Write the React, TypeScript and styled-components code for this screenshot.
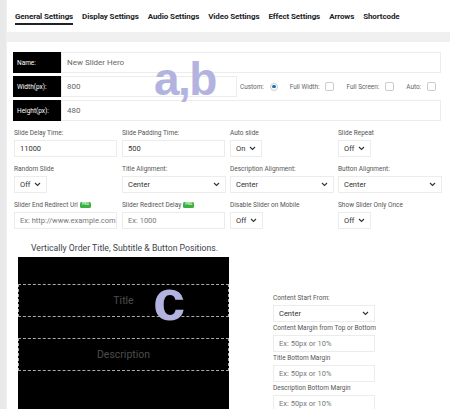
import React from "react";
import styled, { createGlobalStyle } from "styled-components";

const GlobalStyle = createGlobalStyle`
  html, body {
    margin: 0;
    padding: 0;
    background: #f0f0f1;
    font-family: Roboto, "Liberation Sans", sans-serif;
    overflow: hidden;
  }
`;

const tabs = ["General Settings", "Display Settings", "Audio Settings", "Video Settings", "Effect Settings", "Arrows", "Shortcode"];

const Chevron: React.FC = () => (
  <svg width="7" height="5" viewBox="0 0 7 5">
    <path d="M1 1 L3.5 3.5 L6 1" fill="none" stroke="#333" strokeWidth="1.1" />
  </svg>
);

const Select: React.FC<{ value: string; wide?: boolean; width?: number }> = ({ value, wide, width }) => (
  <SelectBox $wide={wide} $width={width}>
    <span>{value}</span>
    <Chevron />
  </SelectBox>
);

type Cell = { label: string; pro?: boolean; kind: "input" | "select"; value: string; placeholder?: boolean; wide?: boolean };

const grid: Cell[] = [
  { label: "Slide Delay Time:", kind: "input", value: "11000" },
  { label: "Slide Padding Time:", kind: "input", value: "500" },
  { label: "Auto slide", kind: "select", value: "On" },
  { label: "Slide Repeat", kind: "select", value: "Off" },
  { label: "Random Slide", kind: "select", value: "Off" },
  { label: "Title Alignment:", kind: "select", value: "Center", wide: true },
  { label: "Description Alignment:", kind: "select", value: "Center", wide: true },
  { label: "Button Alignment:", kind: "select", value: "Center", wide: true },
  { label: "Slider End Redirect Url", pro: true, kind: "input", value: "Ex: http://www.example.com", placeholder: true },
  { label: "Slider Redirect Delay", pro: true, kind: "input", value: "Ex: 1000", placeholder: true },
  { label: "Disable Slider on Mobile", kind: "select", value: "Off" },
  { label: "Show Slider Only Once", kind: "select", value: "Off" },
];

export default function App() {
  return (
    <>
      <GlobalStyle />
      <Page>
        <TabBar>
          {tabs.map((t, i) => (
            <Tab key={t} $active={i === 0}>
              {t}
            </Tab>
          ))}
        </TabBar>
        <Card>
          <Annotation $size={46} $top={14} $left={147}>
            a,b
          </Annotation>
          <Rows>
            <FieldRow>
              <BlackLabel>Name:</BlackLabel>
              <TextBox>New Slider Hero</TextBox>
            </FieldRow>
            <FieldRow>
              <BlackLabel>Width(px):</BlackLabel>
              <TextBox $width={176}>800</TextBox>
              <Options>
                <Option>
                  Custom: <Radio />
                </Option>
                <Option>
                  Full Width: <Check />
                </Option>
                <Option>
                  Full Screen: <Check />
                </Option>
                <Option>
                  Auto: <Check />
                </Option>
              </Options>
            </FieldRow>
            <FieldRow>
              <BlackLabel>Height(px):</BlackLabel>
              <TextBox>480</TextBox>
            </FieldRow>
          </Rows>

          <Grid>
            {grid.map((c) => (
              <Field key={c.label}>
                <Label>
                  {c.label}
                  {c.pro && <Pro>PRO</Pro>}
                </Label>
                {c.kind === "input" ? (
                  <SmallInput $placeholder={c.placeholder}>{c.value}</SmallInput>
                ) : (
                  <Select value={c.value} wide={c.wide} />
                )}
              </Field>
            ))}
          </Grid>

          <SectionTitle>Vertically Order Title, Subtitle &amp; Button Positions.</SectionTitle>

          <Split>
            <Preview>
              <DashedSlot>Title</DashedSlot>
              <DashedSlot>Description</DashedSlot>
              <Annotation $size={58} $top={14} $left={135}>
                c
              </Annotation>
            </Preview>
            <SidePanel>
              <SideField>
                <Label>Content Start From:</Label>
                <Select value="Center" width={102} />
              </SideField>
              <SideField>
                <Label>Content Margin from Top or Bottom</Label>
                <SideInput>Ex: 50px or 10%</SideInput>
              </SideField>
              <SideField>
                <Label>Title Bottom Margin</Label>
                <SideInput>Ex: 50px or 10%</SideInput>
              </SideField>
              <SideField>
                <Label>Description Bottom Margin</Label>
                <SideInput>Ex: 50px or 10%</SideInput>
              </SideField>
            </SidePanel>
          </Split>
        </Card>
      </Page>
    </>
  );
}

const Page = styled.div`
  padding-left: 7px;
  height: 409px;
  background: linear-gradient(to right, #e9e9ea 0, #e9e9ea 6px, #f0f0f1 6px);
`;

const TabBar = styled.div`
  background: #fff;
  height: 32px;
  display: flex;
  gap: 9px;
  padding-left: 8px;
  box-sizing: border-box;
`;

const Tab = styled.div<{ $active?: boolean }>`
  font-size: 8px;
  font-weight: 700;
  color: #1d2327;
  padding-top: 12px;
  height: 25px;
  box-sizing: border-box;
  border-bottom: 2px solid ${(p) => (p.$active ? "#1d2327" : "transparent")};
  white-space: nowrap;
  letter-spacing: -0.1px;
`;

const Card = styled.div`
  position: relative;
  margin-top: 10px;
  background: #fff;
  padding: 10px 9px 0 6px;
  height: 400px;
`;

const Annotation = styled.div<{ $size: number; $top: number; $left: number }>`
  position: absolute;
  top: ${(p) => p.$top}px;
  left: ${(p) => p.$left}px;
  font-family: "Liberation Sans", Arial, sans-serif;
  font-weight: 700;
  font-size: ${(p) => p.$size}px;
  line-height: 1;
  letter-spacing: -1.5px;
  color: #b3b3e0;
  pointer-events: none;
`;

const Rows = styled.div`
  display: grid;
  gap: 3px;
`;

const FieldRow = styled.div`
  display: flex;
  height: 21px;
`;

const BlackLabel = styled.div`
  width: 48px;
  flex: none;
  background: #000;
  color: #fff;
  font-size: 6.5px;
  display: flex;
  align-items: center;
  padding-left: 4px;
  box-sizing: border-box;
`;

const TextBox = styled.div<{ $width?: number }>`
  ${(p) => (p.$width ? `width: ${p.$width}px; flex: none;` : "flex: 1;")}
  border: 1px solid #ececec;
  box-sizing: border-box;
  font-size: 8px;
  color: #666;
  display: flex;
  align-items: center;
  padding-left: 5px;
`;

const Options = styled.div`
  display: flex;
  align-items: center;
  gap: 12px;
  padding-left: 3px;
`;

const Option = styled.label`
  display: flex;
  align-items: center;
  gap: 6px;
  font-size: 6.4px;
  color: #666;
`;

const Radio = styled.span`
  width: 8px;
  height: 8px;
  border-radius: 50%;
  border: 1px solid #ccc;
  box-sizing: border-box;
  display: inline-flex;
  align-items: center;
  justify-content: center;
  &::after {
    content: "";
    width: 3.5px;
    height: 3.5px;
    border-radius: 50%;
    background: #2271b1;
  }
`;

const Check = styled.span`
  width: 9px;
  height: 9px;
  border: 1px solid #ccc;
  border-radius: 2px;
  box-sizing: border-box;
  display: inline-block;
`;

const Grid = styled.div`
  display: grid;
  grid-template-columns: repeat(4, 108px);
  row-gap: 8px;
  padding: 8px 0 0 1px;
`;

const Field = styled.div`
  display: flex;
  flex-direction: column;
  align-items: flex-start;
  gap: 3px;
`;

const Label = styled.div`
  font-size: 6.5px;
  color: #555;
  height: 8px;
  display: flex;
  align-items: center;
  gap: 2px;
  white-space: nowrap;
`;

const Pro = styled.span`
  background: #3cb043;
  color: #dfffd9;
  font-size: 3.5px;
  font-weight: 700;
  border-radius: 1.5px;
  padding: 1px 2px;
  line-height: 1;
`;

const SmallInput = styled.div<{ $placeholder?: boolean }>`
  width: 103px;
  height: 17px;
  border: 1px solid #ececec;
  box-sizing: border-box;
  font-size: 7.5px;
  color: ${(p) => (p.$placeholder ? "#777" : "#333")};
  display: flex;
  align-items: center;
  padding-left: 5px;
  overflow: hidden;
  white-space: nowrap;
`;

const SelectBox = styled.div<{ $wide?: boolean; $width?: number }>`
  width: ${(p) => (p.$width ? `${p.$width}px` : p.$wide ? "104px" : "auto")};
  height: 17px;
  border: 1px solid #ececec;
  box-sizing: border-box;
  font-size: 7.5px;
  color: #333;
  display: flex;
  align-items: center;
  justify-content: space-between;
  gap: 4px;
  padding: 0 5px;
`;

const SectionTitle = styled.div`
  font-size: 8.7px;
  color: #3c434a;
  padding: 14px 0 0 18px;
  height: 14px;
  box-sizing: content-box;
`;

const Split = styled.div`
  display: flex;
  gap: 44px;
  padding-left: 5px;
`;

const Preview = styled.div`
  position: relative;
  width: 211px;
  height: 160px;
  background: #000;
  padding-top: 27px;
  box-sizing: border-box;
  display: flex;
  flex-direction: column;
  gap: 21px;
`;

const DashedSlot = styled.div`
  height: 33px;
  border: 1px dashed #aaa;
  box-sizing: border-box;
  display: flex;
  align-items: center;
  justify-content: center;
  font-size: 10.5px;
  color: #4d4d4d;
`;

const SidePanel = styled.div`
  padding-top: 37px;
  display: flex;
  flex-direction: column;
  gap: 2px;
`;

const SideField = styled.div`
  display: flex;
  flex-direction: column;
  gap: 3px;
`;

const SideInput = styled.div`
  width: 102px;
  height: 17px;
  border: 1px solid #ececec;
  box-sizing: border-box;
  font-size: 7.5px;
  color: #777;
  display: flex;
  align-items: center;
  padding-left: 5px;
`;
